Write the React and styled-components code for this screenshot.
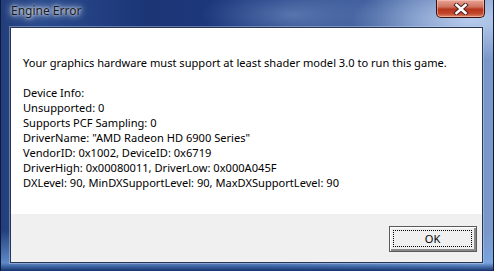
import React from 'react';
import styled, {createGlobalStyle} from 'styled-components';

const GlobalStyle = createGlobalStyle`
    html, body{
        margin:0;
        padding:0;
        background:#1c3a78;
    }
`;

const lines = [
    'Device Info:',
    'Unsupported: 0',
    'Supports PCF Sampling: 0',
    'DriverName: "AMD Radeon HD 6900 Series"',
    'VendorID: 0x1002, DeviceID: 0x6719',
    'DriverHigh: 0x00080011, DriverLow: 0x000A045F',
    'DXLevel: 90, MinDXSupportLevel: 90, MaxDXSupportLevel: 90',
];

const CloseIcon = () => (
    <svg width="16" height="12" viewBox="0 0 16 12">
        <path d="M3.5 2 L12.5 10 M12.5 2 L3.5 10" stroke="#4a2020" strokeWidth="4.4" strokeLinecap="square" />
        <path d="M3.5 2 L12.5 10 M12.5 2 L3.5 10" stroke="#fff" strokeWidth="2.6" strokeLinecap="square" />
    </svg>
);

const App = () =>{
    return(
        <>
            <GlobalStyle />
            <Window>
                <TitleBar>
                    <Title>Engine Error</Title>
                    <CloseButton><CloseIcon /></CloseButton>
                </TitleBar>
                <Client>
                    <Message>
                        <p className="lead">Your graphics hardware must support at least shader model 3.0 to run this game.</p>
                        {lines.map((l) => <p key={l}>{l}</p>)}
                    </Message>
                    <ButtonBar>
                        <OkButton><span>OK</span></OkButton>
                    </ButtonBar>
                </Client>
            </Window>
        </>
    );
};

const Window = styled.div`
    width:494px;
    height:271px;
    box-sizing:border-box;
    padding:0 10px 8px 9px;
    display:flex;
    flex-direction:column;
    border-left:1px solid #0b1a3c;
    border-right:1px solid #0b1a3c;
    background:
        linear-gradient(180deg, rgba(255,255,255,0) 0%, rgba(255,255,255,0) 85%, rgba(120,170,230,0.7) 97%, rgba(20,50,110,1) 100%),
        radial-gradient(ellipse 120px 40px at 470px 20px, rgba(190,210,240,0.9), rgba(190,210,240,0) 100%),
        radial-gradient(ellipse 90px 30px at 290px 15px, rgba(120,150,200,0.6), rgba(120,150,200,0) 100%),
        linear-gradient(90deg, #233e7a 0%, #2a4b8e 8%, #1b3575 30%, #1f3a80 55%, #4d6ca8 80%, #7d9acb 100%);
    font-family:"Segoe UI", "Noto Sans", "Open Sans", sans-serif;
`;

const TitleBar = styled.div`
    height:27px;
    display:flex;
    justify-content:space-between;
    align-items:flex-start;
    margin:0 -2px 0 1px;
`;

const Title = styled.div`
    font-size:12px;
    color:#1a1a1a;
    padding-top:3px;
    line-height:16px;
    text-shadow:0 0 6px #dfe7f5, 0 0 10px #dfe7f5, 0 0 3px #eef2fa;
`;

const CloseButton = styled.div`
    width:49px;
    height:18px;
    box-sizing:border-box;
    display:flex;
    align-items:center;
    justify-content:center;
    border:1px solid #3c1210;
    border-top:none;
    border-radius:0 0 5px 5px;
    background:linear-gradient(180deg, #e8a597 0%, #d0735f 40%, #b5351d 55%, #c4472c 80%, #dc8a6c 100%);
    box-shadow:inset 0 0 0 1px rgba(255,210,200,0.5);
`;

const Client = styled.div`
    flex:1;
    display:flex;
    flex-direction:column;
    border:1px solid #2a3550;
    box-shadow:0 0 0 1px rgba(200,220,250,0.4);
    background:#ffffff;
`;

const Message = styled.div`
    flex:1;
    padding:27px 0 0 12px;
    font-size:11.1px;
    line-height:15px;
    color:#000;
    p{
        margin:0;
    }
    .lead{
        margin-bottom:15px;
    }
`;

const ButtonBar = styled.div`
    height:48px;
    box-sizing:border-box;
    background:#f0f0f0;
    display:flex;
    justify-content:flex-end;
    align-items:flex-start;
    padding:12px 5px 0 0;
`;

const OkButton = styled.div`
    width:88px;
    height:26px;
    box-sizing:border-box;
    border:1px solid #5a5a5a;
    box-shadow:inset 1px 1px 0 #ffffff, inset -2px -2px 0 #8a8a8a;
    background:#f0f0f0;
    padding:3px 4px 4px 3px;
    display:flex;
    span{
        flex:1;
        border:1px dotted #000;
        display:flex;
        align-items:center;
        justify-content:center;
        font-size:11.1px;
        color:#000;
    }
`;

export default App;
